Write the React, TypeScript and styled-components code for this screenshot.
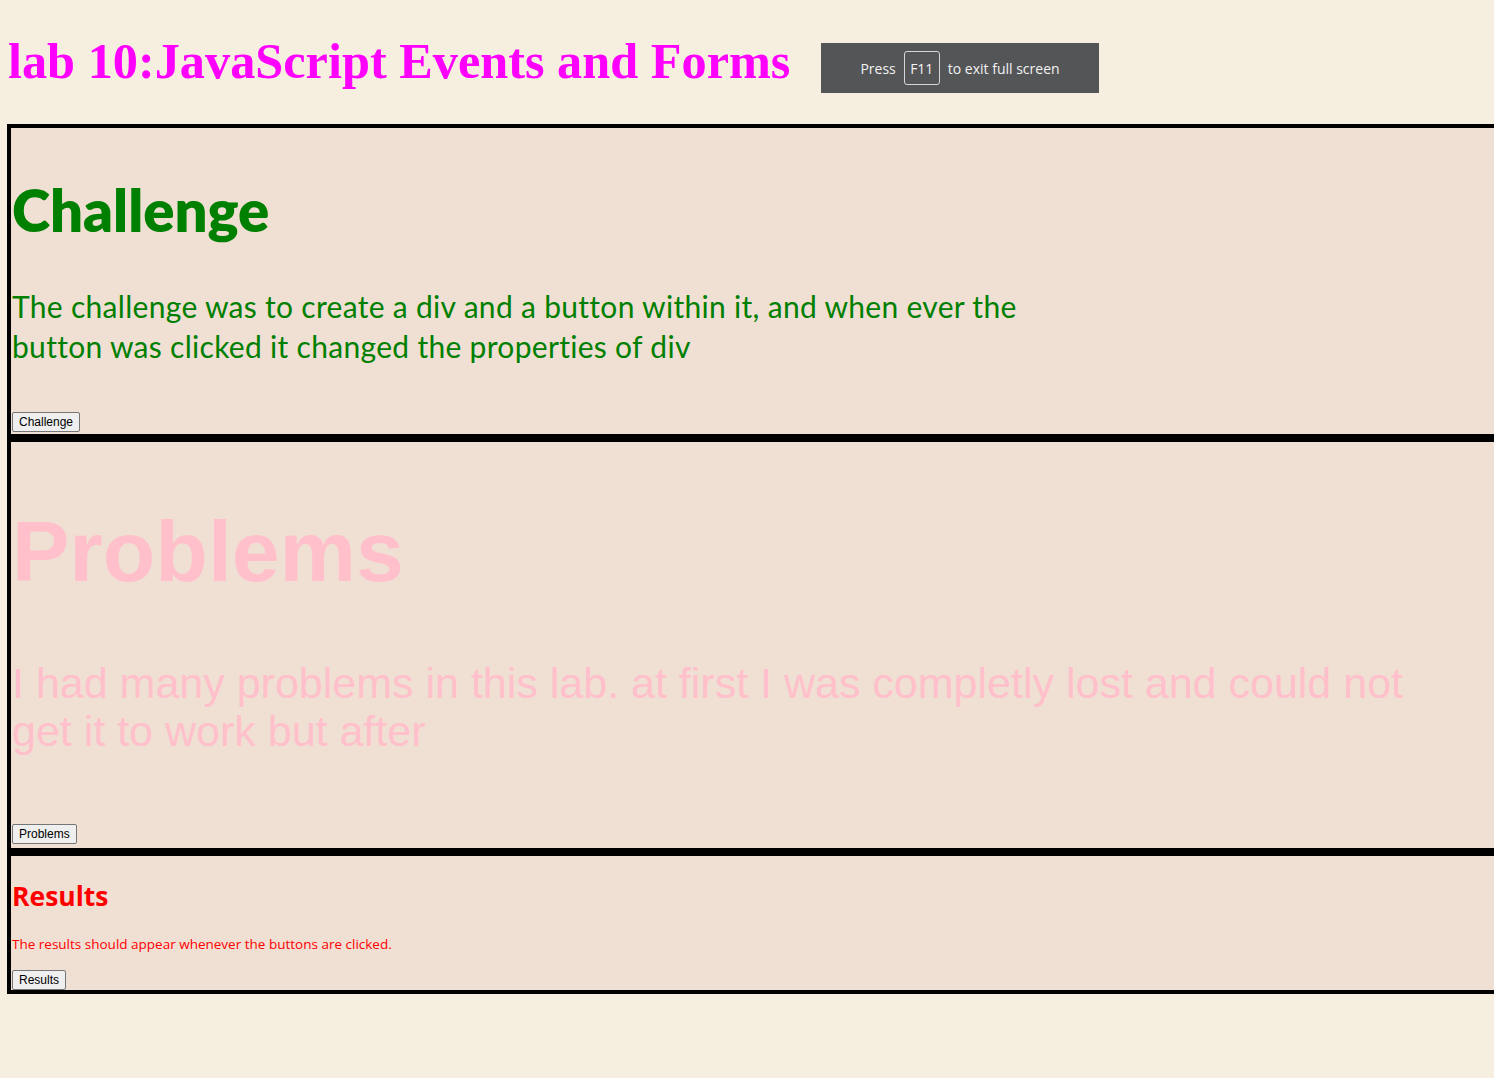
import React from "react";
import styled, { createGlobalStyle, css } from "styled-components";

const Global = createGlobalStyle`
  html, body { margin: 0; padding: 0; overflow-x: hidden; }
  body { background: #f6efdf; }
`;

type Variant = "challenge" | "problems" | "results";

const Page = styled.div`
  position: relative;
  display: flow-root;
  padding: 0 0 60px 7px;
  min-height: 1078px;
  box-sizing: border-box;
`;

const Title = styled.h1`
  margin: 33px 0 34px 1px;
  font-family: "Liberation Serif", "Times New Roman", serif;
  font-weight: bold;
  font-size: 50.3px;
  line-height: 57px;
  color: #ff00ff;
`;

const Panel = styled.section`
  width: 1600px;
  border: 4px solid #000;
  background: #f0dfd3;
  display: flow-root;
  padding-left: 1px;
`;

const headingStyles: Record<Variant, ReturnType<typeof css>> = {
  challenge: css`
    margin: 50px 0 0;
    font-family: "Comic Sans MS", "Lato", sans-serif;
    font-weight: 800;
    font-size: 58px;
    line-height: 64px;
    color: #008000;
  `,
  problems: css`
    margin: 60px 0 0;
    font-family: "Liberation Sans", Arial, sans-serif;
    font-weight: bold;
    font-size: 86px;
    line-height: 99px;
    color: #ffc0cb;
  `,
  results: css`
    margin: 23px 0 0;
    font-family: "Segoe UI", "Open Sans", sans-serif;
    font-weight: bold;
    font-size: 26.5px;
    line-height: 34px;
    color: #ff0000;
  `,
};

const Heading = styled.h2<{ $variant: Variant }>`
  ${(p) => headingStyles[p.$variant]}
`;

const textStyles: Record<Variant, ReturnType<typeof css>> = {
  challenge: css`
    margin: 44px 0 46px;
    font-family: "Comic Sans MS", "Lato", sans-serif;
    font-size: 30px;
    letter-spacing: 0.3px;
    line-height: 40px;
    color: #008000;
  `,
  problems: css`
    margin: 58px 0 69px;
    font-family: "Liberation Sans", Arial, sans-serif;
    font-size: 43px;
    line-height: 48px;
    color: #ffc0cb;
  `,
  results: css`
    margin: 21px 0 16px;
    font-family: "Segoe UI", "Open Sans", sans-serif;
    font-size: 13.5px;
    line-height: 20px;
    color: #ff0000;
  `,
};

const Text = styled.p<{ $variant: Variant }>`
  ${(p) => textStyles[p.$variant]}
`;

const ActionButton = styled.button<{ $gap: number }>`
  display: block;
  box-sizing: border-box;
  height: 20px;
  margin: 0 0 ${(p) => p.$gap}px;
  padding: 0 6px;
  font-family: "Liberation Sans", Arial, sans-serif;
  font-size: 12px;
  line-height: 18px;
  color: #000;
  background: #efefef;
  border: 1px solid #767676;
  border-radius: 2px;
`;

const Toast = styled.div`
  position: absolute;
  top: 43px;
  left: 821px;
  width: 278px;
  height: 50px;
  background: #545557;
  color: #f2f2f2;
  display: flex;
  align-items: center;
  justify-content: center;
  gap: 8px;
  font-family: "Segoe UI", "Open Sans", sans-serif;
  font-size: 14px;
`;

const Key = styled.span`
  box-sizing: border-box;
  width: 36px;
  height: 34px;
  border: 1px solid #d6d6d6;
  border-radius: 3px;
  display: flex;
  align-items: center;
  justify-content: center;
`;

export default function App() {
  return (
    <>
      <Global />
      <Page>
        <Title>lab 10:JavaScript Events and Forms</Title>
        <Panel>
          <Heading $variant="challenge">Challenge</Heading>
          <Text $variant="challenge">
            The challenge was to create a div and a button within it, and when ever the
            <br />
            button was clicked it changed the properties of div
          </Text>
          <ActionButton $gap={2}>Challenge</ActionButton>
        </Panel>
        <Panel>
          <Heading $variant="problems">Problems</Heading>
          <Text $variant="problems">
            I had many problems in this lab. at first I was completly lost and could not
            <br />
            get it to work but after
          </Text>
          <ActionButton $gap={4}>Problems</ActionButton>
        </Panel>
        <Panel>
          <Heading $variant="results">Results</Heading>
          <Text $variant="results">The results should appear whenever the buttons are clicked.</Text>
          <ActionButton $gap={0}>Results</ActionButton>
        </Panel>
        <Toast>
          <span>Press</span>
          <Key>F11</Key>
          <span>to exit full screen</span>
        </Toast>
      </Page>
    </>
  );
}
